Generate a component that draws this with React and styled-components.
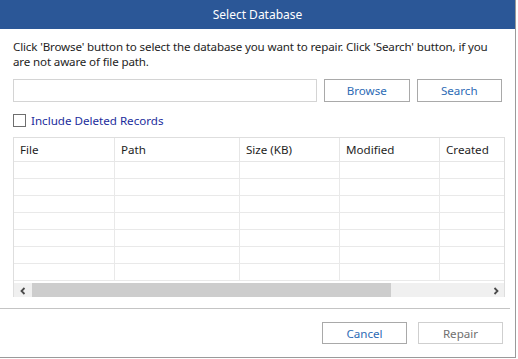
import React from "react";
import styled, { createGlobalStyle } from "styled-components";

const Global = createGlobalStyle`
  html, body { margin: 0; padding: 0; background: #ffffff; }
  body { font-family: "Noto Sans", "Open Sans", sans-serif; font-size: 12px; color: #1e1e1e; }
  * { box-sizing: border-box; }
`;

const Dialog = styled.div`
  width: 516px;
  height: 358px;
  background: #fff;
  border-right: 1px solid #9a9a9a;
  border-bottom: 1px solid #9a9a9a;
  display: flex;
  flex-direction: column;
`;

const TitleBar = styled.div`
  height: 29px;
  flex: none;
  background: #2b5797;
  color: #fff;
  display: flex;
  align-items: center;
  justify-content: center;
  font-size: 12px;
  padding-bottom: 1px;
`;

const Body = styled.div`
  padding: 0 13px;
  display: flex;
  flex-direction: column;
`;

const Description = styled.p`
  margin: 10px 0 0;
  font-size: 11.6px;
  line-height: 15px;
  letter-spacing: -0.15px;
  color: #1e1e1e;
`;

const SearchRow = styled.div`
  margin-top: 10px;
  display: flex;
  height: 23px;
`;

const PathInput = styled.div`
  width: 306px;
  border: 1px solid #d4d4d4;
  background: #fff;
`;

const Button = styled.button`
  width: ${p => p.$w || 86}px;
  height: 100%;
  margin-left: ${p => p.$gap || 0}px;
  border: 1px solid ${p => (p.$disabled ? "#cfcfcf" : "#a9a9a9")};
  background: #fff;
  color: ${p => (p.$disabled ? "#707070" : "#2d6bb5")};
  font-family: inherit;
  font-size: 11.6px;
  padding: 0;
  cursor: default;
`;

const CheckRow = styled.label`
  margin-top: 11px;
  display: flex;
  align-items: center;
  height: 14px;
  color: #1b2d9c;
  font-size: 11.6px;
`;

const Box = styled.span`
  width: 13px;
  height: 13px;
  border: 1px solid #6e6e6e;
  margin-right: 5px;
  background: #fff;
`;

const Table = styled.div`
  margin-top: 10px;
  width: 492px;
  height: 160px;
  border: 1px solid #dedede;
  border-bottom: none;
  display: flex;
  flex-direction: column;
  overflow: hidden;
`;

const cols = "101px 125px 100px 100px 1fr";

const HeaderRow = styled.div`
  display: grid;
  grid-template-columns: ${cols};
  height: 24px;
  flex: none;
  border-bottom: 1px solid #e6e6e6;
`;

const HeadCell = styled.div`
  display: flex;
  align-items: center;
  padding-left: 6px;
  font-size: 11.6px;
  color: #1e1e1e;
  border-right: ${p => (p.$last ? "none" : "1px solid #e6e6e6")};
`;

const Row = styled.div`
  display: grid;
  grid-template-columns: ${cols};
  height: 17px;
  flex: none;
  border-bottom: 1px solid #e9e9e9;
`;

const Cell = styled.div`
  border-right: ${p => (p.$last ? "none" : "1px solid #e9e9e9")};
`;

const ScrollBar = styled.div`
  margin-top: 2px;
  height: 16px;
  flex: none;
  display: flex;
  background: #f0f0f0;
`;

const Arrow = styled.div`
  width: 17px;
  display: flex;
  align-items: center;
  justify-content: center;
`;

const Thumb = styled.div`
  width: 359px;
  margin-left: 1px;
  background: #cdcdcd;
`;

const Track = styled.div`
  flex: 1;
`;

const Divider = styled.div`
  margin-top: 11px;
  height: 1px;
  flex: none;
  width: 510px;
  background: #c4c4c4;
`;

const Footer = styled.div`
  margin-top: 13px;
  display: flex;
  justify-content: flex-end;
  padding-right: 12px;
  height: 22px;
`;

const Chevron = ({ dir }) => (
  <svg width="8" height="8" viewBox="0 0 8 8">
    <path
      d={dir === "left" ? "M5.5 1 L2.5 4 L5.5 7" : "M2.5 1 L5.5 4 L2.5 7"}
      fill="none"
      stroke="#4a4a4a"
      strokeWidth="1.8"
    />
  </svg>
);

const headers = ["File", "Path", "Size (KB)", "Modified", "Created"];

export default function App() {
  return (
    <>
      <Global />
      <Dialog>
        <TitleBar>Select Database</TitleBar>
        <Body>
          <Description>
            Click 'Browse' button to select the database you want to repair. Click 'Search' button, if you
            <br />
            are not aware of file path.
          </Description>
          <SearchRow>
            <PathInput />
            <Button $gap={7}>Browse</Button>
            <Button $gap={7}>Search</Button>
          </SearchRow>
          <CheckRow>
            <Box />
            Include Deleted Records
          </CheckRow>
          <Table>
            <HeaderRow>
              {headers.map((h, i) => (
                <HeadCell key={h} $last={i === headers.length - 1}>{h}</HeadCell>
              ))}
            </HeaderRow>
            {Array.from({ length: 7 }).map((_, r) => (
              <Row key={r}>
                {headers.map((h, i) => (
                  <Cell key={h} $last={i === headers.length - 1} />
                ))}
              </Row>
            ))}
            <ScrollBar>
              <Arrow><Chevron dir="left" /></Arrow>
              <Thumb />
              <Track />
              <Arrow><Chevron dir="right" /></Arrow>
            </ScrollBar>
          </Table>
        </Body>
        <Divider />
        <Footer>
          <Button $w={85}>Cancel</Button>
          <Button $w={85} $gap={11} $disabled>Repair</Button>
        </Footer>
      </Dialog>
    </>
  );
}
